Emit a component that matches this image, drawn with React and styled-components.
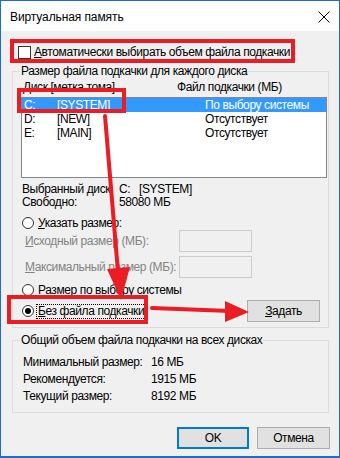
import React from 'react';
import styled, { createGlobalStyle } from 'styled-components';

const Global = createGlobalStyle`
  html, body { margin: 0; padding: 0; background: #ffffff; }
  body { font-family: "Liberation Sans", Arial, sans-serif; }
  * { box-sizing: border-box; }
`;

const Window = styled.div`
  position: relative;
  width: 340px;
  height: 458px;
  border: 1px solid #1c6fc4;
  border-bottom-width: 2px;
  background: #f0f0f0;
  display: flex;
  flex-direction: column;
  font-size: 12px;
  letter-spacing: -0.4px;
  color: #000;
`;

const TitleBar = styled.div`
  height: 30px;
  flex: none;
  background: #ffffff;
  display: flex;
  align-items: center;
  justify-content: space-between;
  padding: 1px 9px 0 9px;
  font-size: 12px;
  letter-spacing: -0.1px;
`;

const Content = styled.div`
  display: flex;
  flex-direction: column;
  padding-top: 14px;
`;

const U = styled.span`
  text-decoration: underline;
`;

const CheckRow = styled.div`
  display: flex;
  align-items: center;
  height: 14px;
  padding-left: 17px;
  gap: 3px;
`;

const CheckBox = styled.span`
  width: 13px;
  height: 13px;
  border: 1px solid #333;
  background: #fff;
  flex: none;
`;

const Group = styled.fieldset`
  margin: ${p => p.$top}px 10px 0 11px;
  padding: 0 0 ${p => p.$bottom}px 0;
  border: 1px solid #dcdcdc;
  min-width: 0;
`;

const Legend = styled.legend`
  margin-left: 7px;
  padding: 0 1px;
  line-height: 14px;
  height: 14px;
`;

const Header = styled.div`
  display: flex;
  height: 14px;
  align-items: center;
  margin-top: 2px;
  padding-left: 10px;
`;

const Col = styled.span`
  width: ${p => p.$w}px;
  flex: none;
  white-space: nowrap;
`;

const List = styled.div`
  margin: 3px 1px 0 8px;
  height: 81px;
  border: 1px solid #828790;
  background: #fff;
`;

const ListRow = styled.div`
  display: flex;
  align-items: center;
  height: 14px;
  padding-left: 2px;
  background: ${p => (p.$sel ? '#3399ff' : 'transparent')};
  color: ${p => (p.$sel ? '#fff' : '#000')};
`;

const Info = styled.div`
  margin-top: 4px;
  padding-left: 9px;
`;

const InfoRow = styled.div`
  display: flex;
  align-items: center;
  height: 13px;
`;

const RadioRow = styled.div`
  display: flex;
  align-items: center;
  height: 14px;
  margin-top: ${p => p.$top}px;
  padding-left: 9px;
  gap: 4px;
`;

const Radio = styled.span`
  width: 12px;
  height: 12px;
  border-radius: 50%;
  border: 1px solid #333;
  background: #fff;
  flex: none;
  display: flex;
  align-items: center;
  justify-content: center;
  &::after {
    content: '';
    width: 6px;
    height: 6px;
    border-radius: 50%;
    background: ${p => (p.$on ? '#000' : 'transparent')};
  }
`;

const SizeRow = styled.div`
  display: flex;
  align-items: center;
  height: 22px;
  margin-top: ${p => p.$top}px;
  padding-left: 12px;
  color: #838383;
`;

const SizeInput = styled.span`
  width: 73px;
  height: 22px;
  border: 1px solid #cccccc;
  background: #f0f0f0;
  flex: none;
`;

const NoFileRow = styled.div`
  display: flex;
  align-items: center;
  justify-content: space-between;
  height: 22px;
  margin-top: 3px;
  padding: 0 8px 0 9px;
`;

const RadioLabel = styled.div`
  display: flex;
  align-items: center;
  gap: 2px;
`;

const Focus = styled.span`
  border: 1px dotted #000;
  padding: 0 1px;
  line-height: 13px;
`;

const Button = styled.div`
  width: ${p => p.$w}px;
  height: 22px;
  flex: none;
  display: flex;
  align-items: center;
  justify-content: center;
  background: #e1e1e1;
  border: ${p => (p.$default ? '2px solid #0078d7' : '1px solid #adadad')};
`;

const Totals = styled.div`
  padding: 6px 0 0 10px;
`;

const TotalRow = styled.div`
  display: flex;
  align-items: center;
  height: 17px;
`;

const Footer = styled.div`
  display: flex;
  justify-content: flex-end;
  gap: 8px;
  margin-top: 14px;
  padding-right: 9px;
`;

const Overlay = styled.svg`
  position: absolute;
  top: -1px;
  left: -1px;
  width: 340px;
  height: 458px;
  pointer-events: none;
`;

const RED = '#ea1c24';

export default function App() {
  return (
    <>
      <Global />
      <Window>
        <TitleBar>
          <span>Виртуальная память</span>
          <svg width="12" height="12" viewBox="0 0 12 12">
            <path d="M0.5 0.5 L11.5 11.5 M11.5 0.5 L0.5 11.5" stroke="#000" strokeWidth="1" fill="none" />
          </svg>
        </TitleBar>
        <Content>
          <CheckRow>
            <CheckBox />
            <span><U>А</U>втоматически выбирать объем файла подкачки</span>
          </CheckRow>

          <Group $top={5} $bottom={5}>
            <Legend>Размер файла подкачки для каждого диска</Legend>
            <Header>
              <Col $w={154}><U>Д</U>иск [метка тома]</Col>
              <Col $w={140}>Файл подкачки (МБ)</Col>
            </Header>
            <List>
              <ListRow $sel>
                <Col $w={33}>C:</Col>
                <Col $w={148}>[SYSTEM]</Col>
                <Col $w={110}>По выбору системы</Col>
              </ListRow>
              <ListRow>
                <Col $w={33}>D:</Col>
                <Col $w={148}>[NEW]</Col>
                <Col $w={110}>Отсутствует</Col>
              </ListRow>
              <ListRow>
                <Col $w={33}>E:</Col>
                <Col $w={148}>[MAIN]</Col>
                <Col $w={110}>Отсутствует</Col>
              </ListRow>
            </List>
            <Info>
              <InfoRow>
                <Col $w={97}>Выбранный диск:</Col>
                <span>C:&nbsp;&nbsp;&nbsp;[SYSTEM]</span>
              </InfoRow>
              <InfoRow>
                <Col $w={97}>Свободно:</Col>
                <span>58080 МБ</span>
              </InfoRow>
            </Info>
            <RadioRow $top={8}>
              <Radio />
              <span><U>У</U>казать размер:</span>
            </RadioRow>
            <SizeRow $top={0}>
              <Col $w={154}><U>И</U>сходный размер (МБ):</Col>
              <SizeInput />
            </SizeRow>
            <SizeRow $top={4}>
              <Col $w={154}><U>М</U>аксимальный размер (МБ):</Col>
              <SizeInput />
            </SizeRow>
            <RadioRow $top={5}>
              <Radio />
              <span>Размер по выбору системы</span>
            </RadioRow>
            <NoFileRow>
              <RadioLabel>
                <Radio $on />
                <Focus><U>Б</U>ез файла подкачки</Focus>
              </RadioLabel>
              <Button $w={73}><U>З</U>адать</Button>
            </NoFileRow>
          </Group>

          <Group $top={5} $bottom={8}>
            <Legend>Общий объем файла подкачки на всех дисках</Legend>
            <Totals>
              <TotalRow>
                <Col $w={128}>Минимальный размер:</Col>
                <span>16 МБ</span>
              </TotalRow>
              <TotalRow>
                <Col $w={128}>Рекомендуется:</Col>
                <span>1915 МБ</span>
              </TotalRow>
              <TotalRow>
                <Col $w={128}>Текущий размер:</Col>
                <span>8192 МБ</span>
              </TotalRow>
            </Totals>
          </Group>

          <Footer>
            <Button $w={72} $default>OK</Button>
            <Button $w={73}>Отмена</Button>
          </Footer>
        </Content>

        <Overlay viewBox="0 0 340 458">
          <rect x="12" y="41" width="281" height="20" fill="none" stroke={RED} strokeWidth="4" />
          <rect x="19" y="90" width="105" height="21" fill="none" stroke={RED} strokeWidth="4" />
          <rect x="9" y="297" width="137" height="25" fill="none" stroke={RED} strokeWidth="4" />
          <line x1="105" y1="116" x2="118" y2="272" stroke={RED} strokeWidth="4" strokeLinecap="round" />
          <polygon points="107,269 130,267 121,300" fill={RED} />
          <line x1="152" y1="308" x2="230" y2="311" stroke={RED} strokeWidth="4" strokeLinecap="round" />
          <polygon points="225,301 225,322 249,312" fill={RED} />
        </Overlay>
      </Window>
    </>
  );
}
